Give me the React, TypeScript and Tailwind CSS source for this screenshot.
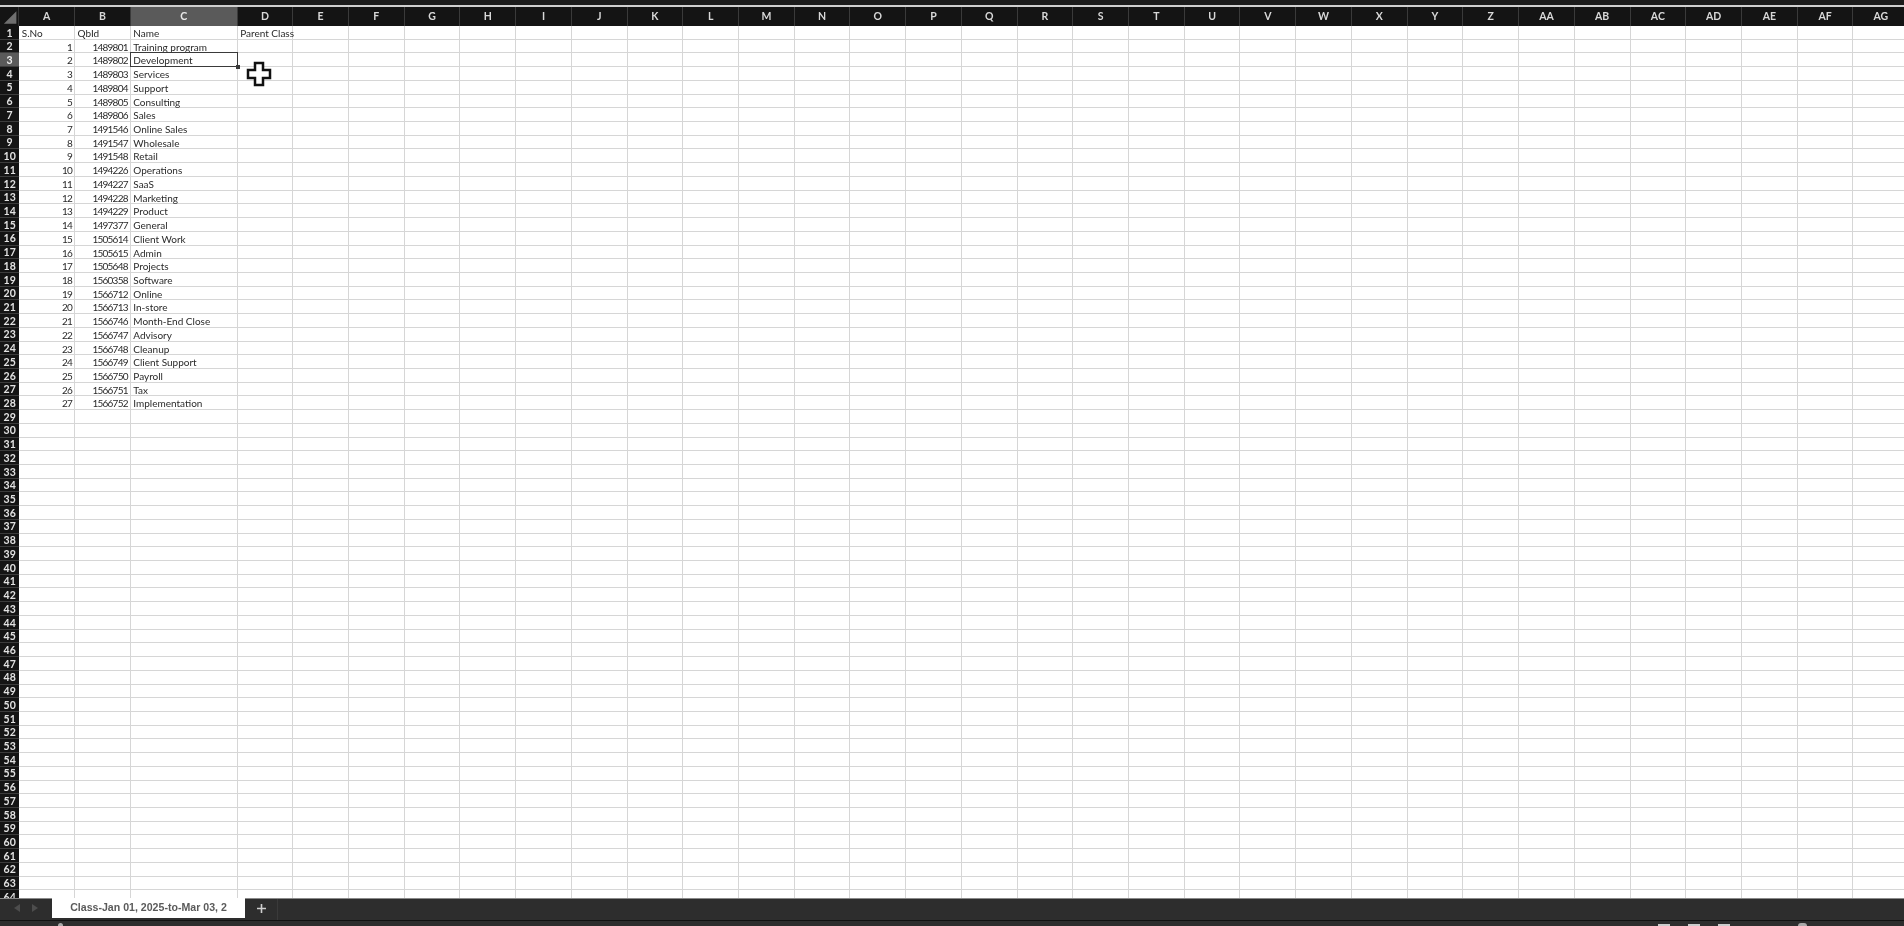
const cols = ["A","B","C","D","E","F","G","H","I","J","K","L","M","N","O","P","Q","R","S","T","U","V","W","X","Y","Z","AA","AB","AC","AD","AE","AF","AG"];
const names = ["Training program","Development","Services","Support","Consulting","Sales","Online Sales","Wholesale","Retail","Operations","SaaS","Marketing","Product","General","Client Work","Admin","Projects","Software","Online","In-store","Month-End Close","Advisory","Cleanup","Client Support","Payroll","Tax","Implementation"];
const ids = [1489801,1489802,1489803,1489804,1489805,1489806,1491546,1491547,1491548,1494226,1494227,1494228,1494229,1497377,1505614,1505615,1505648,1560358,1566712,1566713,1566746,1566747,1566748,1566749,1566750,1566751,1566752];
const rows = Array.from({ length: 64 }, (_, i) => i + 1);
const gridCols = "grid-cols-[19.3px_55.8px_55.7px_106.9px_55.6px_repeat(29,55.72px)]";

function Cell({ children, right }: { children?: React.ReactNode; right?: boolean }) {
  return (
    <div className={`h-[13.72px] min-w-0 overflow-visible whitespace-nowrap border-b border-r border-[#d6d6d6] pl-[2.5px] pr-[2px] pt-[1px] text-[10px] leading-[13.5px] text-[#2a2a2a] ${right ? "text-right tracking-[-0.75px]" : "text-left"}`}>
      {children}
    </div>
  );
}

export default function App() {
  return (
    <div className="flex h-[926px] w-[1904px] flex-col overflow-hidden bg-white font-['Lato','Liberation_Sans',sans-serif] blur-[0.4px]">
      <div className="h-[5px] shrink-0 bg-[#1b1b1b]" />
      <div className="h-[2px] shrink-0 bg-[#cfcfcf]" />
      <div className={`grid h-[19px] shrink-0 ${gridCols} bg-[#141414]`}>
        <div className="relative border-r border-[#333]">
          <svg viewBox="0 0 19 19" className="absolute inset-0 h-full w-full"><path d="M17 4V17H4Z" fill="#6f6f6f" /></svg>
        </div>
        {cols.map((c) => (
          <div key={c} className={`flex items-center justify-center border-r border-[#3a3a3a] text-[10.5px] font-bold ${c === "C" ? "bg-[#5a5a5a] text-[#e8e8e8]" : "text-[#d8d8d8]"}`}>{c}</div>
        ))}
      </div>
      <div className="relative min-h-0 flex-1 overflow-hidden">
        <div className={`grid ${gridCols} auto-rows-[13.72px]`}>
          {rows.map((r) => (
            <div key={r} className="contents">
              <div className={`flex h-[13.72px] items-center justify-center border-b border-[#3c3c3c] pt-[1px] text-[10.5px] font-bold leading-none ${r === 3 ? "bg-[#5a5a5a] text-[#eee]" : "bg-[#141414] text-[#e2e2e2]"}`}>{r}</div>
              {cols.map((_, ci) => {
                let text: React.ReactNode = null;
                let right = false;
                if (r === 1) text = ["S.No", "QbId", "Name", "Parent Class"][ci] ?? null;
                else if (r - 2 < names.length) {
                  const k = r - 2;
                  if (ci === 0) { text = k + 1; right = true; }
                  if (ci === 1) { text = ids[k]; right = true; }
                  if (ci === 2) text = names[k];
                }
                return <Cell key={ci} right={right}>{text}</Cell>;
              })}
            </div>
          ))}
        </div>
        <div className="absolute left-[130px] top-[26px] h-[15px] w-[108px] border-[1.5px] border-[#3a3a3a]">
          <div className="absolute -bottom-[2.5px] -right-[2.5px] h-[4px] w-[4px] bg-[#3a3a3a]" />
        </div>
        <svg viewBox="0 0 26 26" className="absolute left-[246px] top-[34.5px] h-[26px] w-[26px]">
          <path d="M9 2H17V9H24V17H17V24H9V17H2V9H9Z" fill="#fff" stroke="#111" strokeWidth="2.5" />
        </svg>
      </div>
      <div className="flex h-[22px] shrink-0 items-stretch border-t border-[#8a8a8a] bg-[#2d2d2d]">
        <div className="flex w-[52px] items-center justify-center gap-[12px] pb-[3px]">
          <svg viewBox="0 0 6 8" className="h-[8px] w-[6px]"><path d="M6 0V8L0 4Z" fill="#4d4d4d" /></svg>
          <svg viewBox="0 0 6 8" className="h-[8px] w-[6px]"><path d="M0 0V8L6 4Z" fill="#4d4d4d" /></svg>
        </div>
        <div className="-mt-px flex h-[20px] w-[193px] items-center justify-center bg-white font-['Liberation_Sans',sans-serif] text-[10.6px] font-bold text-[#5a5a5a]">Class-Jan 01, 2025-to-Mar 03, 2</div>
        <div className="flex w-[33px] items-center justify-center border-r border-[#3a3a3a] pb-[3px]">
          <svg viewBox="0 0 9 9" className="h-[9px] w-[9px]"><path d="M4.5 0V9M0 4.5H9" stroke="#cfcfcf" strokeWidth="1.6" /></svg>
        </div>
      </div>
      <div className="flex h-[6px] shrink-0 items-end overflow-hidden border-t border-[#111] bg-[#2d2d2d]">
        <div className="ml-[58px] h-[3px] w-[5px] rounded-t-full bg-[#aaa]" />
        <div className="ml-[1595px] h-[2px] w-[12px] bg-[#ccc]" />
        <div className="ml-[18px] h-[2px] w-[12px] bg-[#ccc]" />
        <div className="ml-[18px] h-[2px] w-[12px] bg-[#ccc]" />
        <div className="ml-[68px] h-[3px] w-[9px] rounded-t-full bg-[#aaa]" />
      </div>
    </div>
  );
}
